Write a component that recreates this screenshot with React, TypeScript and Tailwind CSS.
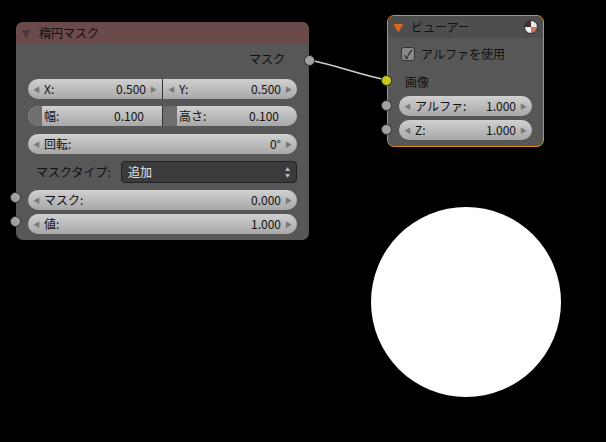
const font = { fontFamily: '"Noto Sans CJK JP", "DejaVu Sans", sans-serif' }

function Socket({ color = 'bg-[#a1a1a1]' }: { color?: string }) {
  return <div className={`h-[11px] w-[11px] rounded-full border border-[#2a2a2a] ${color}`} />
}

function Arrow({ dir }: { dir: 'l' | 'r' }) {
  return <span className="text-[7px] text-[#7a7a7a]">{dir === 'l' ? '◀' : '▶'}</span>
}

function Field({ label, value, cls = '' }: { label: string; value: string; cls?: string }) {
  return (
    <div className={`flex h-[20px] items-center gap-1 bg-gradient-to-b from-[#d0d0d0] to-[#a8a8a8] px-[5px] text-[12px] text-[#111] ${cls}`}>
      <Arrow dir="l" />
      <span className="flex-1">{label}</span>
      <span>{value}</span>
      <Arrow dir="r" />
    </div>
  )
}

function Slider({ label, value, cls = '' }: { label: string; value: string; cls?: string }) {
  return (
    <div className={`flex h-[20px] items-center overflow-hidden bg-gradient-to-b from-[#d0d0d0] to-[#a8a8a8] text-[12px] text-[#111] ${cls}`}>
      <div className="h-full w-[14px] bg-[#6f6f6f]" />
      <span className="flex-1 pl-[2px]">{label}</span>
      <span className="pr-[18px]">{value}</span>
    </div>
  )
}

export default function App() {
  return (
    <div className="relative h-[442px] w-[606px] overflow-hidden bg-black" style={font}>
      <svg className="absolute left-0 top-0" width="606" height="442">
        <path d="M309 60 C 340 66, 356 74, 387 80" stroke="#cfcfcf" strokeWidth="1.5" fill="none" />
        <circle cx="466" cy="302" r="95" fill="#fff" />
      </svg>

      {/* 楕円マスク node */}
      <div className="absolute left-[16px] top-[22px] w-[293px] overflow-hidden rounded-[7px] bg-[#575757] pb-[6px] shadow-[0_2px_6px_rgba(0,0,0,0.6)]">
        <div className="flex h-[22px] items-center gap-2 bg-[#6b4a4a] px-[5px] text-[12px] text-[#111]">
          <span className="text-[10px] text-[#4a3a3a]">▼</span>
          <span>楕円マスク</span>
        </div>
        <div className="flex flex-col gap-[5px] px-[12px] pt-[5px]">
          <div className="flex h-[20px] items-center justify-end pr-[12px] text-[12px] text-[#111]">マスク</div>
          <div className="mt-[5px] flex">
            <Field label="X:" value="0.500" cls="flex-1 rounded-l-full border-r border-[#333]" />
            <Field label="Y:" value="0.500" cls="flex-1 rounded-r-full" />
          </div>
          <div className="mt-[2px] flex">
            <Slider label="幅:" value="0.100" cls="flex-1 rounded-l-full border-r border-[#333]" />
            <Slider label="高さ:" value="0.100" cls="flex-1 rounded-r-full" />
          </div>
          <div className="mt-[3px]">
            <Field label="回転:" value="0°" cls="rounded-full" />
          </div>
          <div className="mt-[2px] flex h-[22px] items-center text-[12px]">
            <span className="w-[93px] pl-[8px] text-[#111]">マスクタイプ:</span>
            <div className="flex h-[22px] flex-1 items-center justify-between rounded-[4px] border border-[#222] bg-[#3b3b3b] px-[6px] text-[#e6e6e6]">
              <span>追加</span>
              <span className="flex flex-col text-[5px] leading-[6px] text-[#bbb]">
                <span>▲</span>
                <span>▼</span>
              </span>
            </div>
          </div>
          <div className="mt-[2px] flex items-center">
            <Field label="マスク:" value="0.000" cls="flex-1 rounded-full" />
          </div>
          <div className="-mt-[1px] flex items-center">
            <Field label="値:" value="1.000" cls="flex-1 rounded-full" />
          </div>
        </div>
      </div>
      <div className="absolute left-[304px] top-[55px]"><Socket /></div>
      <div className="absolute left-[10px] top-[192px]"><Socket /></div>
      <div className="absolute left-[10px] top-[216px]"><Socket /></div>

      {/* ビューアー node */}
      <div className="absolute left-[387px] top-[15px] w-[157px] overflow-hidden rounded-[7px] border border-[#e08a1c] bg-[#575757] pb-[6px]">
        <div className="flex h-[22px] items-center gap-2 bg-[#4e4e4e] px-[5px] text-[12px] text-[#111]">
          <span className="text-[10px] text-[#e0661a]">▼</span>
          <span className="flex-1">ビューアー</span>
          <div className="h-[14px] w-[14px] rounded-full border border-[#333] bg-[conic-gradient(#e9e9e9_0_25%,#c8785a_25%_50%,#f2f2f2_50%_75%,#4a2a2a_75%)]" />
        </div>
        <div className="flex flex-col px-[11px] pt-[6px]">
          <div className="flex h-[20px] items-center gap-[6px] pl-[2px] text-[12px] text-[#111]">
            <div className="flex h-[14px] w-[14px] items-center justify-center rounded-[3px] border border-[#333] bg-[#8a8a8a] text-[12px] leading-none text-[#111]">✓</div>
            <span>アルファを使用</span>
          </div>
          <div className="mt-[8px] flex h-[20px] items-center pl-[6px] text-[12px] text-[#111]">画像</div>
          <div className="mt-[4px] flex flex-col gap-[4px]">
            <Field label="アルファ:" value="1.000" cls="rounded-full" />
            <Field label="Z:" value="1.000" cls="rounded-full" />
          </div>
        </div>
      </div>
      <div className="absolute left-[381px] top-[75px]"><Socket color="bg-[#c9c61c]" /></div>
      <div className="absolute left-[381px] top-[100px]"><Socket /></div>
      <div className="absolute left-[381px] top-[124px]"><Socket /></div>
    </div>
  )
}
